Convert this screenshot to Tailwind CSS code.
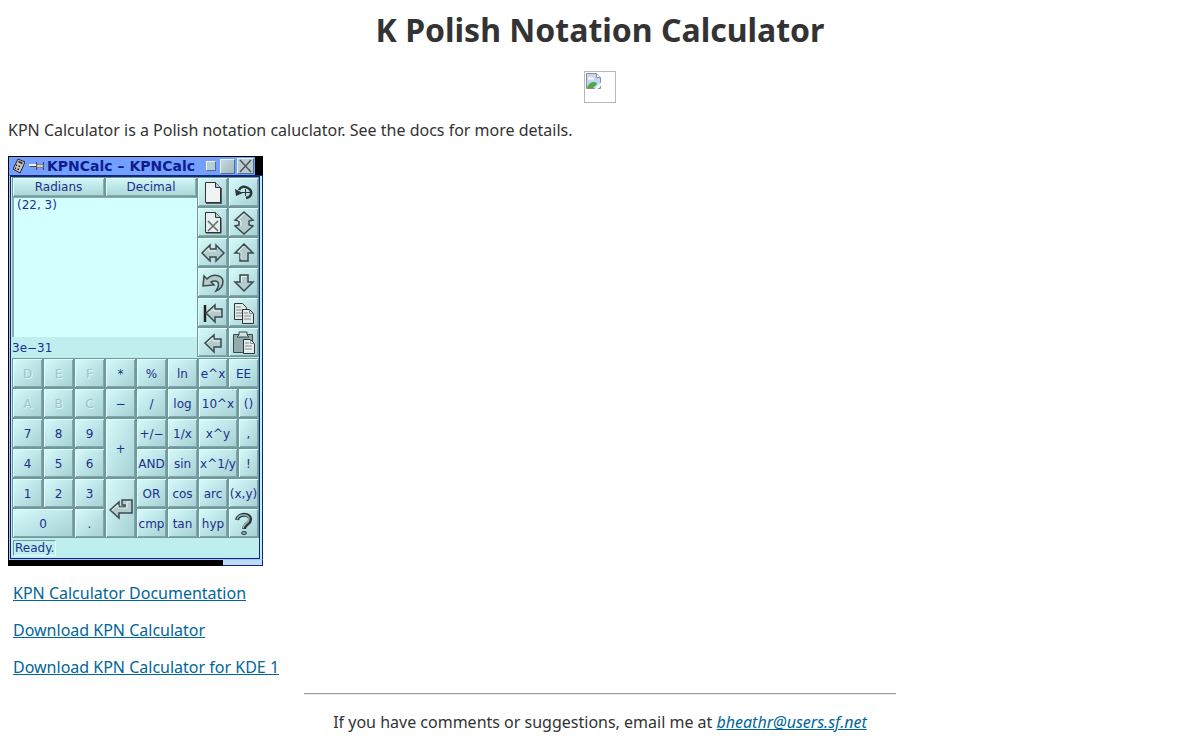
<!DOCTYPE html>
<html lang="en">
  <head>
    <meta charset="UTF-8" />
    <meta name="viewport" content="width=device-width, initial-scale=1.0" />
    <title>K Polish Notation Calculator</title>
    <script src="https://cdn.jsdelivr.net/npm/@tailwindcss/browser@4"></script>
  </head>
  <body class="bg-white text-[#333] font-['Noto_Sans','Open_Sans',sans-serif] text-[16px] leading-6 px-2 pt-2">
    <h1 class="text-[32px] leading-[44px] font-bold text-center">K Polish Notation Calculator</h1>

    <!-- Logo placeholder -->
    <div class="flex justify-center mt-[19px] mb-[15px]">
      <svg class="w-8 h-8 border border-[#b8b8b8]" viewBox="0 0 30 30" role="img" aria-label="Logo">
        <path d="M1.500 1.500h10l4 4v11h-14z" fill="#c5d6f5" stroke="#8a8f96" />
        <path d="M3 6.500a2 2 0 0 1 3-1 2 2 0 0 1 3 2H3z" fill="#fff" />
        <path d="M2 16c1-4 4-6 7-6 2 0 3 1 3 2l-4 4z" fill="#53a846" />
        <path d="M11.500 1.500v4h4" fill="#fff" stroke="#8a8f96" />
        <path d="M9 17.500l7.500-7.500v3L12 17.500z" fill="#fff" />
      </svg>
    </div>

    <p>KPN Calculator is a Polish notation caluclator. See the docs for more details.</p>

    <!-- Calculator window -->
    <div class="mt-[14px] w-[255px] bg-black pl-px pt-px font-['DejaVu_Sans',sans-serif] text-[12px] leading-[14px] text-[#1c2f8c]">
      <div class="mr-2 h-[18px] bg-[#73a0ff] flex items-center pl-1 pr-px">
        <svg class="w-3 h-4 shrink-0" viewBox="0 0 12 16">
          <path d="M5 1l7 3-5 11-7-4z" fill="#c8c8c0" stroke="#222" />
          <path d="M5.500 3.500l4 2M3 7l1 .5M5.500 8l1.500 .5M2 10l1 .5M4.500 11l1.500 .5" stroke="#222" stroke-width="1.500" />
        </svg>
        <svg class="w-4 h-3 ml-1 shrink-0" viewBox="0 0 16 12">
          <path d="M0 5h7" stroke="#f4f4f4" stroke-width="2" />
          <path d="M1 6.500h6M7.500 2v8M14.500 2v8" stroke="#444" />
          <path d="M8 4l3 1 3-1v4l-3-1-3 1z" fill="#e8e8e8" stroke="#777" />
        </svg>
        <span class="ml-[2px] flex-1 whitespace-nowrap text-[14px] leading-[18px] font-bold text-[#101c8c]">KPNCalc – KPNCalc</span>
        <button aria-label="Minimize" class="w-[10px] h-[10px] mr-1 shrink-0 border border-[#e4f4fa] border-r-[#507090] border-b-[#507090] bg-[#b5cdd3]"></button>
        <button aria-label="Maximize" class="w-[15px] h-[15px] mr-[2px] shrink-0 border border-[#e4f4fa] border-r-[#507090] border-b-[#507090] bg-linear-to-br from-[#c8dade] to-[#9db8be]"></button>
        <button aria-label="Close" class="w-[17px] h-4 shrink-0 border border-[#e4f4fa] border-r-[#507090] border-b-[#507090] bg-[#b9cdd0]">
          <svg class="w-full h-full" viewBox="0 0 15 14"><path d="M2 1l11 12M13 1L2 13" stroke="#555" stroke-width="1.500" /></svg>
        </button>
      </div>

      <div class="border border-[#9fc4ff] border-t-[#15257c] border-r-[#15257c] bg-[#bfeeee]">
        <div class="border border-[#15257c] mr-[2px]">
          <div class="grid grid-cols-[185px_62px] pl-px pr-px">
            <div class="flex flex-col">
              <div class="grid grid-cols-[93px_92px] h-5">
                <button class="border border-[#71999b] bg-linear-to-b from-[#d1f8f8] to-[#abd5d8] shadow-[inset_1px_1px_#e4ffff,inset_-1px_-1px_#86afb1]">Radians</button>
                <button class="border border-[#71999b] bg-linear-to-b from-[#d1f8f8] to-[#abd5d8] shadow-[inset_1px_1px_#e4ffff,inset_-1px_-1px_#86afb1]">Decimal</button>
              </div>
              <output class="block flex-1 bg-[#d4ffff] border-t border-l-2 border-[#88aeb0] pl-[3px]">(22, 3)</output>
              <output class="block h-[21px] pt-1">3e−31</output>
            </div>
            <div id="tools" class="grid grid-cols-[31px_31px] auto-rows-[30px] pb-px"></div>
          </div>
          <div id="keys" class="grid grid-cols-[31px_31px_31px_31px_31px_31px_30px_10px_21px] auto-rows-[30px] pl-px"></div>
          <div class="h-5 pl-[2px] pt-[2px]">
            <span class="inline-block border border-t-[#71999b] border-l-[#71999b] border-r-[#dcffff] border-b-[#dcffff] px-px leading-[14px]">Ready.</span>
          </div>
        </div>
      </div>
      <div class="h-[6px] flex justify-end">
        <div class="w-[40px] bg-[#bcdcf4] border-r border-b border-[#15257c]"></div>
      </div>
    </div>

    <ul class="mt-[15px] pl-[5px] space-y-[13px]">
      <li><a href="#docs" class="text-[#069] underline">KPN Calculator Documentation</a></li>
      <li><a href="#download" class="text-[#069] underline">Download KPN Calculator</a></li>
      <li><a href="#kde1" class="text-[#069] underline">Download KPN Calculator for KDE 1</a></li>
    </ul>

    <hr class="w-1/2 mx-auto mt-[14px] border-t border-b border-t-[#999] border-b-[#eee]" />

    <p class="mt-[15px] text-center">
      If you have comments or suggestions, email me at
      <a href="mailto:bheathr@users.sf.net" class="text-[#069] underline italic">bheathr@users.sf.net</a>
    </p>

    <script>
      const arrow = (d) => `<path d="${d}" fill="#b4cbcd" stroke="#3c4a4c" stroke-width="1.500"/>`;

      const icons = {
        New: `<path d="M4.500 1.500h10l5 5v15h-15z" fill="#eef4f4" stroke="#333"/><path d="M14.500 1.500v5h5" fill="#b4cbcd" stroke="#333"/><path d="M5 22h15V7" fill="none" stroke="#333" stroke-width="1.500"/>`,
        Clear: `<path d="M4.500 1.500h10l5 5v15h-15z" fill="#e4eeee" stroke="#333"/><path d="M14.500 1.500v5h5" fill="#b4cbcd" stroke="#333"/><path d="M5 22h15V7" fill="none" stroke="#333"/><path d="M7 10l10 10M17 10L7 20" stroke="#666" stroke-width="1.500"/>`,
        Redo: `<path d="M7 9c2-4 6-4 9-2 5 3 4 9-2 10" fill="none" stroke="#2d3638" stroke-width="2.500"/><path d="M3 8l1 7 7-3z" fill="#2d3638"/><path d="M9 11.500h9M13.500 8v7" stroke="#2d3638"/>`,
        Swap: arrow("M12 1l9 8-4 1v4l4 1-9 8-9-8 4-1v-4l-4-1z") + `<path d="M12 3l-6 6 3 1v5" fill="none" stroke="#e5f4f4"/>`,
        Exchange: arrow("M1 12l8-8v4h6V4l8 8-8 8v-4H9v4z") + `<path d="M3 12l5-5v3h7" fill="none" stroke="#e5f4f4"/>`,
        "Roll up": arrow("M12 3l9 9h-5v8H8v-8H3z") + `<path d="M12 5l-6 6h3v7" fill="none" stroke="#e5f4f4"/>`,
        Undo: `<path d="M6 8c6-6 15-4 16 2 0 5-2 8-7 10 4-6 3-10-1-10-2 0-3 0-4 1l3 3-11 1 1-10z" fill="#b4cbcd" stroke="#3c4a4c" stroke-width="1.500"/>`,
        "Roll down": arrow("M8 4h8v7h5l-9 9-9-9h5z") + `<path d="M9.500 11V5.500h5" fill="none" stroke="#e5f4f4"/>`,
        "Clear all": `<path d="M4 4v17" stroke="#222" stroke-width="2.500"/>` + arrow("M5 12l9-8v4h7v8h-7v5z") + `<path d="M8 12l5-4v2h6" fill="none" stroke="#e5f4f4"/>`,
        Copy: `<path d="M2.500 2.500h8l4 4v12h-12z" fill="#dfeaea" stroke="#333"/><path d="M4 6h5M4 9h7M4 12h7M4 15h7" stroke="#888"/><path d="M10.500 8.500h7l4 4v10h-11z" fill="#dfeaea" stroke="#333"/><path d="M12 12h4M12 15h7M12 18h7M17.500 8.500v4h4" fill="none" stroke="#888"/>`,
        Backspace: arrow("M4 12l9-8v4h7v8h-7v5z") + `<path d="M6 12l6-5v3h7" fill="none" stroke="#e5f4f4"/>`,
        Paste: `<path d="M1.500 3.500h19v18h-19z" fill="#92acae" stroke="#3c4a4c"/><path d="M7 4V1h8v3l2 2H5z" fill="#d5e3e3" stroke="#3c4a4c"/><path d="M11.500 8.500h7l4 4v10h-11z" fill="#e4eeee" stroke="#333"/><path d="M13 12h4M13 15h7M13 18h7M18.500 8.500v4h4" fill="none" stroke="#888"/>`,
        Enter: arrow("M1 13l9-8v5h6V8h-3V3h10v13H10v5z") + `<path d="M3 13l6-5v3h9V5h3" fill="none" stroke="#e5f4f4"/>`,
        Help: `<path d="M5 8c1-7 14-7 13 0 0 4-6 4-6 9" fill="none" stroke="#2d3638" stroke-width="4"/><path d="M5 7.500c1-6 13-6 12 0 0 4-6 4-6 9" fill="none" stroke="#9db4b6" stroke-width="1.500"/><ellipse cx="12" cy="21" rx="2.500" ry="1.500" fill="#9db4b6" stroke="#2d3638"/>`,
      };

      const tools = [
        "New", "Redo", "Clear", "Swap", "Exchange", "Roll up",
        "Undo", "Roll down", "Clear all", "Copy", "Backspace", "Paste",
      ];

      // [label, extra grid classes]
      const keys = [
        ["D"], ["E"], ["F"], ["*"], ["%"], ["ln"], ["e^x"], ["EE", "col-span-2"],
        ["A"], ["B"], ["C"], ["−"], ["/"], ["log"], ["10^x", "col-span-2"], ["()"],
        ["7"], ["8"], ["9"], ["+", "row-span-2"], ["+/−"], ["1/x"], ["x^y", "col-span-2"], [","],
        ["4"], ["5"], ["6"], ["AND"], ["sin"], ["x^1/y", "col-span-2"], ["!"],
        ["1"], ["2"], ["3"], ["Enter", "row-span-2"], ["OR"], ["cos"], ["arc"], ["(x,y)", "col-span-2"],
        ["0", "col-span-2"], ["."], ["cmp"], ["tan"], ["hyp"], ["Help", "col-span-2"],
      ];

      function addButton(parent, label, extra = "") {
        const btn = document.createElement("button");
        btn.className =
          "min-w-0 pt-px flex items-center justify-center whitespace-nowrap border border-[#71999b] bg-linear-to-br from-[#d6fbfb] to-[#a6d0d4] shadow-[inset_1px_1px_#e4ffff,inset_-1px_-1px_#7fa7a9] disabled:text-[#9fc4c8] disabled:text-shadow-[1px_1px_#d9f6f6] " + extra;
        if (icons[label]) {
          btn.setAttribute("aria-label", label);
          btn.innerHTML = `<svg class="w-6 h-6 shrink-0" viewBox="0 0 24 24">${icons[label]}</svg>`;
        } else {
          btn.textContent = label;
        }
        btn.disabled = /^[A-F]$/.test(label);
        parent.appendChild(btn);
      }

      tools.forEach((name) => addButton(document.getElementById("tools"), name));
      keys.forEach(([label, extra]) => addButton(document.getElementById("keys"), label, extra));
    </script>
  </body>
</html>
